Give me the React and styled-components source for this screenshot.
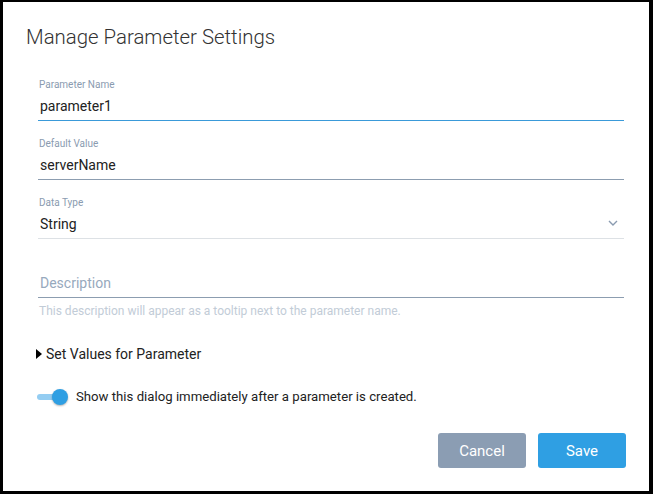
import React, { useState } from 'react'
import styled, { createGlobalStyle } from 'styled-components'

const GlobalStyle = createGlobalStyle`
    html, body {
        margin: 0;
        padding: 0;
        background: #000;
        font-family: Roboto, "Liberation Sans", sans-serif;
    }
    * { box-sizing: border-box; }
`

const colors = {
    text: '#222',
    label: '#8a9bb0',
    focus: '#3a9ad9',
    line: '#8c9db0',
    lineLight: '#dde1e5',
    hint: '#c2ccd7',
    placeholder: '#97a9bd',
    blue: '#2f9fe3',
    gray: '#8b9db3',
}

const Window = styled.div`
    width: 653px;
    height: 494px;
    padding: 2px 4px 3px 3px;
`

const Dialog = styled.div`
    height: 100%;
    background: #fff;
    padding: 23px 23px 0 23px;
    display: flex;
    flex-direction: column;
`

const Title = styled.h1`
    margin: 0 0 30px;
    font-size: 20.4px;
    line-height: 24px;
    font-weight: 300;
    color: #333;
`

const Form = styled.div`
    padding: 0 2px 0 12px;
    display: flex;
    flex-direction: column;
`

const Field = styled.div`
    display: flex;
    flex-direction: column;
    margin-bottom: ${p => p.$last ? 0 : 17}px;
`

const Label = styled.label`
    height: 12px;
    font-size: 10px;
    line-height: 12px;
    color: ${colors.label};
    margin-bottom: 5px;
    padding-left: 1px;
`

const InputRow = styled.div`
    display: flex;
    align-items: center;
    padding: 0 2px 4px;
    border-bottom: 1px solid ${p => p.$line};
`

const Value = styled.input`
    flex: 1;
    border: none;
    outline: none;
    padding: 0;
    font-family: inherit;
    font-size: 14px;
    line-height: 20px;
    height: 20px;
    color: ${colors.text};
    background: transparent;

    &::placeholder {
        color: ${colors.placeholder};
    }
`

const Chevron = styled.svg`
    margin-right: 4px;
    margin-top: -2px;
`

const Hint = styled.div`
    margin-top: 6px;
    font-size: 12px;
    line-height: 14px;
    color: ${colors.hint};
    padding-left: 1px;
`

const Expander = styled.div`
    margin-top: 26px;
    display: flex;
    align-items: center;
    gap: 4px;
    font-size: 14px;
    line-height: 20px;
    color: ${colors.text};
    margin-left: -2px;
`

const Triangle = styled.span`
    width: 0;
    height: 0;
    border-top: 5.5px solid transparent;
    border-bottom: 5.5px solid transparent;
    border-left: 6px solid #000;
`

const ToggleRow = styled.div`
    margin-top: 23px;
    display: flex;
    align-items: center;
    gap: 8px;
    font-size: 13.2px;
    line-height: 20px;
    color: ${colors.text};
    margin-left: -1px;
`

const Track = styled.span`
    position: relative;
    width: 31px;
    height: 20px;
    display: inline-block;

    &::before {
        content: '';
        position: absolute;
        left: 0;
        top: 7px;
        width: 24px;
        height: 6px;
        border-radius: 3px;
        background: ${p => p.$on ? '#94cdf2' : '#ccc'};
    }
`

const Thumb = styled.span`
    position: absolute;
    top: 2px;
    left: ${p => p.$on ? 15 : 0}px;
    width: 16px;
    height: 16px;
    border-radius: 50%;
    background: ${p => p.$on ? colors.blue : '#f5f5f5'};
    box-shadow: 0 1px 2px rgba(0,0,0,0.3);
`

const Buttons = styled.div`
    margin-top: 26px;
    display: flex;
    justify-content: flex-end;
    gap: 12px;
`

const Button = styled.button`
    width: 88px;
    height: 35px;
    border: none;
    border-radius: 3px;
    font-family: inherit;
    font-size: 15px;
    color: #fff;
    background: ${p => p.$primary ? colors.blue : colors.gray};
    cursor: pointer;
`

function App() {
    let [showDialog, setShowDialog] = useState(true)

    return (
        <>
            <GlobalStyle />
            <Window>
                <Dialog>
                    <Title>Manage Parameter Settings</Title>
                    <Form>
                        <Field>
                            <Label>Parameter Name</Label>
                            <InputRow $line={colors.focus}>
                                <Value defaultValue="parameter1" />
                            </InputRow>
                        </Field>
                        <Field>
                            <Label>Default Value</Label>
                            <InputRow $line={colors.line}>
                                <Value defaultValue="serverName" />
                            </InputRow>
                        </Field>
                        <Field>
                            <Label>Data Type</Label>
                            <InputRow $line={colors.lineLight}>
                                <Value defaultValue="String" readOnly />
                                <Chevron width="10" height="6" viewBox="0 0 10 6">
                                    <path d="M1 1 L5 5 L9 1" fill="none" stroke={colors.label} strokeWidth="1.4" />
                                </Chevron>
                            </InputRow>
                        </Field>
                        <Field $last>
                            <Label />
                            <InputRow $line={colors.line}>
                                <Value placeholder="Description" />
                            </InputRow>
                            <Hint>This description will appear as a tooltip next to the parameter name.</Hint>
                        </Field>

                        <Expander>
                            <Triangle />
                            Set Values for Parameter
                        </Expander>

                        <ToggleRow onClick={() => setShowDialog(!showDialog)}>
                            <Track $on={showDialog}>
                                <Thumb $on={showDialog} />
                            </Track>
                            Show this dialog immediately after a parameter is created.
                        </ToggleRow>
                    </Form>

                    <Buttons>
                        <Button>Cancel</Button>
                        <Button $primary>Save</Button>
                    </Buttons>
                </Dialog>
            </Window>
        </>
    )
}

export default App
